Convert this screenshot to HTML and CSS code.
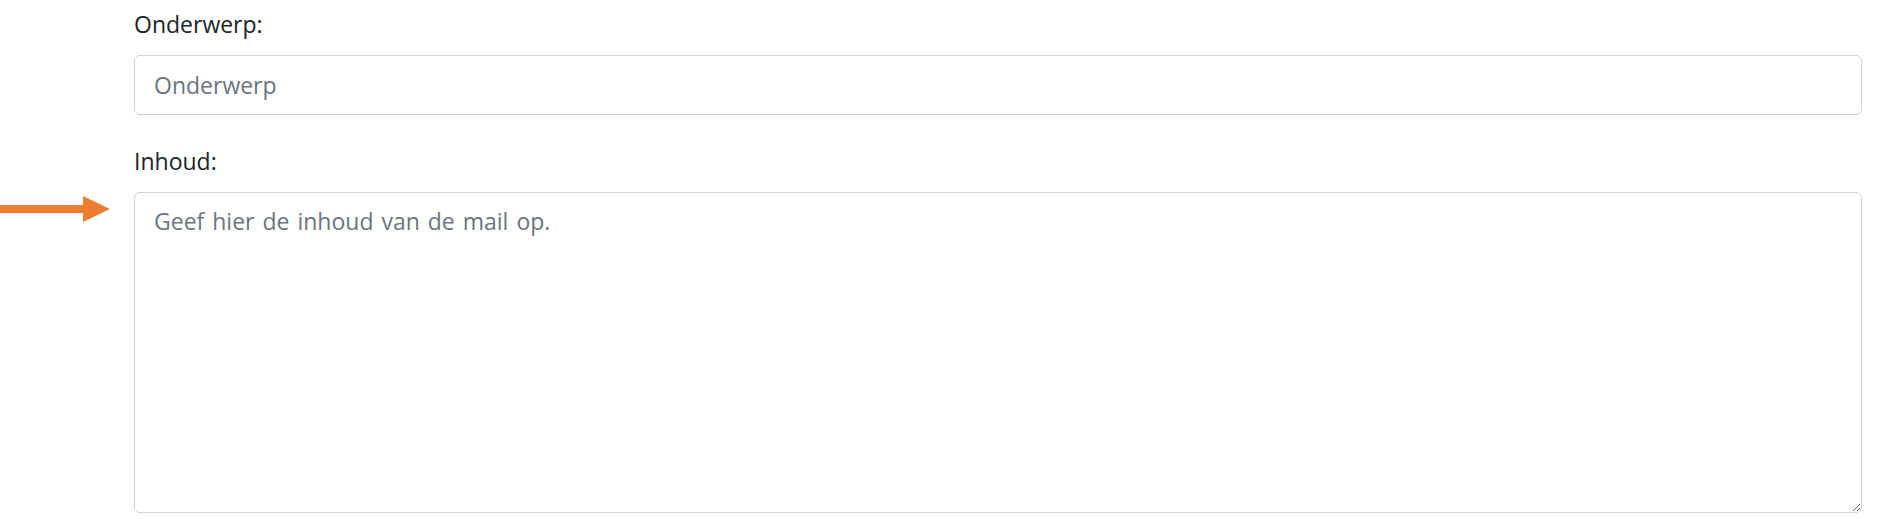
FILE: index.html
```html
<!DOCTYPE html>
<html lang="nl">
<head>
<meta charset="utf-8">
<title>Mail</title>
<link rel="stylesheet" href="styles.css">
</head>
<body>
<form class="mail-form">
  <div class="form-group">
    <div class="gutter"></div>
    <label class="field-label" for="onderwerp">Onderwerp:</label>
    <div class="gutter"></div>
    <input class="form-control" id="onderwerp" type="text" placeholder="Onderwerp">
  </div>
  <div class="form-group">
    <div class="gutter"></div>
    <label class="field-label" for="inhoud">Inhoud:</label>
    <div class="gutter arrow-cell">
      <svg class="arrow" width="110" height="26" viewBox="0 0 110 26" aria-hidden="true">
        <rect x="0" y="9" width="84" height="8" fill="#ed7d31"/>
        <polygon points="83,0 110,13 83,26" fill="#ed7d31"/>
      </svg>
    </div>
    <textarea class="form-control textarea" id="inhoud" placeholder="Geef hier de inhoud van de mail op."></textarea>
  </div>
</form>
</body>
</html>
```

FILE: styles.css
```css
html, body {
  margin: 0;
  padding: 0;
  background: #ffffff;
}

body {
  font-family: "Open Sans", "Noto Sans", "Liberation Sans", sans-serif;
  font-size: 23px;
  color: #212529;
}

.mail-form {
  display: flex;
  flex-direction: column;
  gap: 29px;
  padding: 7px 15px 0 0;
}

.form-group {
  display: grid;
  grid-template-columns: 134px 1fr;
  row-gap: 14px;
}

.field-label {
  display: block;
  line-height: 34px;
  height: 34px;
}

.form-control {
  box-sizing: border-box;
  width: 100%;
  margin: 0;
  font-family: inherit;
  font-size: 23px;
  color: #495057;
  background: #ffffff;
  border: 1px solid #ced4da;
  border-radius: 6px;
  outline: none;
}

input.form-control {
  height: 60px;
  padding: 0 19px;
}

.form-control::placeholder {
  color: #6c757d;
  opacity: 1;
}

.textarea {
  height: 321px;
  padding: 11px 19px 10px;
  line-height: 34.5px;
  word-spacing: 2px;
  resize: vertical;
}

.arrow-cell {
  display: flex;
  align-items: flex-start;
}

.arrow {
  display: block;
  margin-top: 4px;
}
```
